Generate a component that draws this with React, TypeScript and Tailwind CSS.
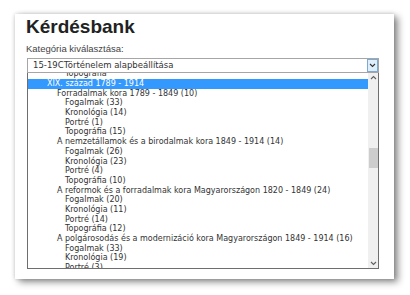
import React from "react";

type Row = { level: 0 | 1 | 2; text: string; selected?: boolean };

const rows: Row[] = [
  { level: 2, text: "Topográfia" },
  { level: 0, text: "XIX. század 1789 - 1914", selected: true },
  { level: 1, text: "Forradalmak kora 1789 - 1849 (10)" },
  { level: 2, text: "Fogalmak (33)" },
  { level: 2, text: "Kronológia (14)" },
  { level: 2, text: "Portré (1)" },
  { level: 2, text: "Topográfia (15)" },
  { level: 1, text: "A nemzetállamok és a birodalmak kora 1849 - 1914 (14)" },
  { level: 2, text: "Fogalmak (26)" },
  { level: 2, text: "Kronológia (23)" },
  { level: 2, text: "Portré (4)" },
  { level: 2, text: "Topográfia (10)" },
  { level: 1, text: "A reformok és a forradalmak kora Magyarországon 1820 - 1849 (24)" },
  { level: 2, text: "Fogalmak (20)" },
  { level: 2, text: "Kronológia (11)" },
  { level: 2, text: "Portré (14)" },
  { level: 2, text: "Topográfia (12)" },
  { level: 1, text: "A polgárosodás és a modernizáció kora Magyarországon 1849 - 1914 (16)" },
  { level: 2, text: "Fogalmak (33)" },
  { level: 2, text: "Kronológia (19)" },
  { level: 2, text: "Portré (3)" },
];

const indent = ["pl-[19px]", "pl-[29px]", "pl-[37px]"];

function Chevron({ up, className }: { up?: boolean; className?: string }) {
  return (
    <svg width="7" height="5" viewBox="0 0 7 5" className={className}>
      <path
        d={up ? "M1 4 L3.5 1.5 L6 4" : "M1 1 L3.5 3.5 L6 1"}
        fill="none"
        stroke="currentColor"
        strokeWidth="1.1"
      />
    </svg>
  );
}

export default function App() {
  return (
    <div className="w-[410px] h-[295px] bg-white pt-[14px] pl-[15px] overflow-hidden">
      <div className="w-[379px] h-[265px] bg-white shadow-[4px_3px_7px_rgba(0,0,0,0.45),0_0_4px_rgba(0,0,0,0.18)] pl-[12px] pt-[2px] flex flex-col">
        <h1 className="font-['Liberation_Sans',Arial,sans-serif] font-bold text-[19px] leading-[22px] text-[#222] ml-[-1px]">
          Kérdésbank
        </h1>
        <div className="mt-[5px] font-['Liberation_Sans',Arial,sans-serif] text-[9.5px] leading-[12px] text-[#444] ml-[-1px]">
          Kategória kiválasztása:
        </div>
        <div className="mt-[3px] w-[352px] h-[15px] border border-[#a6a6a6] flex items-stretch bg-white">
          <div className="flex-1 pl-[5px] font-['DejaVu_Sans',Verdana,sans-serif] text-[8.5px] leading-[13px] text-[#333] whitespace-nowrap overflow-hidden">
            15-19CTörténelem alapbeállítása
          </div>
          <div className="w-[11px] bg-[#dfeefb] border border-[#7fa9cf] flex items-center justify-center text-[#333]">
            <Chevron />
          </div>
        </div>
        <div className="w-[352px] h-[196px] border border-t-0 border-[#6e6e6e] flex bg-white">
          <div className="flex-1 overflow-hidden">
            <div className="mt-[-3.7px] font-['DejaVu_Sans',Verdana,sans-serif] text-[8px] text-[#333]">
              {rows.map((r, i) => (
                <div
                  key={i}
                  className={`h-[9.7px] leading-[9.7px] whitespace-nowrap ${indent[r.level]} ${
                    r.selected ? "bg-[#3399ff] text-white" : ""
                  }`}
                >
                  {r.text}
                </div>
              ))}
            </div>
          </div>
          <div className="w-[10px] bg-[#f0f0f0] flex flex-col items-center text-[#606060]">
            <div className="h-[9px] flex items-center justify-center">
              <Chevron up />
            </div>
            <div className="mt-[66px] h-[20px] w-[9px] bg-[#cdcdcd]" />
            <div className="flex-1" />
            <div className="h-[9px] flex items-center justify-center">
              <Chevron />
            </div>
          </div>
        </div>
      </div>
    </div>
  );
}
